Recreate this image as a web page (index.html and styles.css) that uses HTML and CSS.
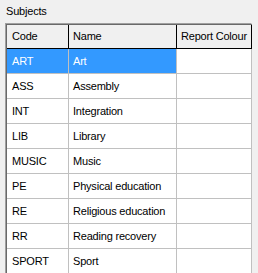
FILE: index.html
```html
<!DOCTYPE html>
<html>
<head>
<meta charset="utf-8">
<link rel="stylesheet" href="styles.css">
</head>
<body>
<div class="title">Subjects</div>
<div class="grid">
  <table class="table">
    <thead>
      <tr>
        <th class="c-code">Code</th>
        <th class="c-name">Name</th>
        <th class="c-rep">Report Colour</th>
      </tr>
    </thead>
    <tbody>
      <tr class="sel"><td>ART</td><td>Art</td><td></td></tr>
      <tr><td>ASS</td><td>Assembly</td><td></td></tr>
      <tr><td>INT</td><td>Integration</td><td></td></tr>
      <tr><td>LIB</td><td>Library</td><td></td></tr>
      <tr><td>MUSIC</td><td>Music</td><td></td></tr>
      <tr><td>PE</td><td>Physical education</td><td></td></tr>
      <tr><td>RE</td><td>Religious education</td><td></td></tr>
      <tr><td>RR</td><td>Reading recovery</td><td></td></tr>
      <tr><td>SPORT</td><td>Sport</td><td></td></tr>
    </tbody>
  </table>
</div>
</body>
</html>
```
FILE: styles.css
```css
html, body {
  margin: 0;
  padding: 0;
  height: 273px;
  overflow: hidden;
  background: #f0f0f0;
  font-family: "Liberation Sans", Arial, sans-serif;
  font-size: 11px;
  letter-spacing: -0.2px;
  color: #000;
}
.title {
  height: 18px;
  padding: 5px 0 0 6px;
  line-height: 13px;
}
.grid {
  margin-left: 5px;
  width: 245px;
  border-top: 1px solid #a0a0a0;
  border-left: 1px solid #a0a0a0;
  border-right: 1px solid #ffffff;
  background: #ffffff;
}
.table {
  border-collapse: separate;
  border-spacing: 0;
  table-layout: fixed;
  width: 245px;
  border-top: 1px solid #696969;
  border-left: 1px solid #696969;
}
.table th {
  height: 23px;
  line-height: 23px;
  padding: 0 0 0 4px;
  text-align: left;
  font-weight: normal;
  background: #f0f0f0;
  border-right: 1px solid #000;
  border-bottom: 1px solid #000;
  white-space: nowrap;
  overflow: hidden;
}
.table td {
  height: 24px;
  line-height: 24px;
  padding: 0 0 0 4px;
  border-right: 1px solid #c0c0c0;
  border-bottom: 1px solid #c0c0c0;
  white-space: nowrap;
  overflow: hidden;
}
.table th.c-code { width: 56px; padding-left: 5px; }
.table th.c-name { width: 103px; }
.table th.c-rep { width: 70px; }
.table td:first-child { padding-left: 5px; }
.sel td:first-child, .sel td:nth-child(2) {
  background: #3399ff;
  color: #fff;
}
```
